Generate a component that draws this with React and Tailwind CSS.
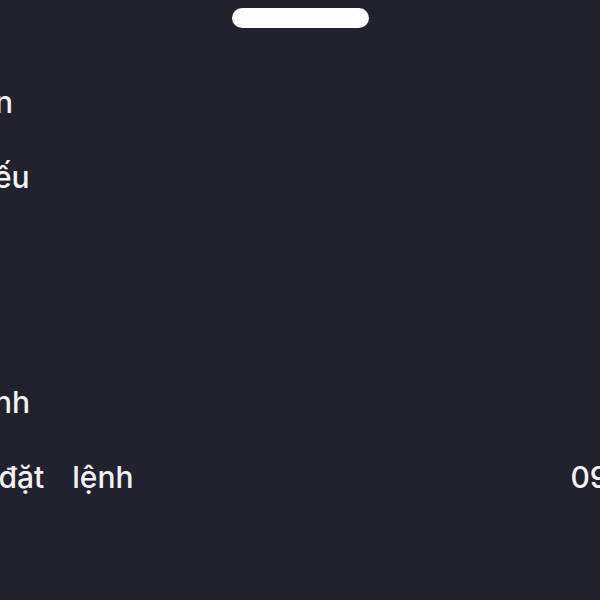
const rows = [
  { label: 'Tiểu khoản', value: '0001' },
  { label: 'Mã cổ phiếu', value: 'FPT' },
  { label: 'Giá đặt', value: '95,000' },
  { label: 'KL đặt', value: '100' },
  { label: 'Số hiệu lệnh', value: '1234' },
  {
    label: (
      <>
        <span className="[word-spacing:2px]">Thời gian </span>
        <span className="[word-spacing:20px]">đặt lệnh</span>
      </>
    ),
    value: '09:15:32 12/03/2024',
  },
];

export default function App() {
  return (
    <div className="h-[600px] w-[600px] overflow-hidden bg-[#22212e] font-['Inter',sans-serif] text-[#f2f2f4]">
      <div className="mx-auto mt-[8px] h-[20px] w-[137px] rounded-full bg-white" />
      <div className="mt-[36px] ml-[-146px] w-[1016px]">
        {rows.map((row, i) => (
          <div key={i} className="flex h-[75px] items-center justify-between text-[30px] font-medium leading-[36px]">
            <span className="whitespace-nowrap">{row.label}</span>
            <span className="whitespace-nowrap">{row.value}</span>
          </div>
        ))}
      </div>
    </div>
  );
}
